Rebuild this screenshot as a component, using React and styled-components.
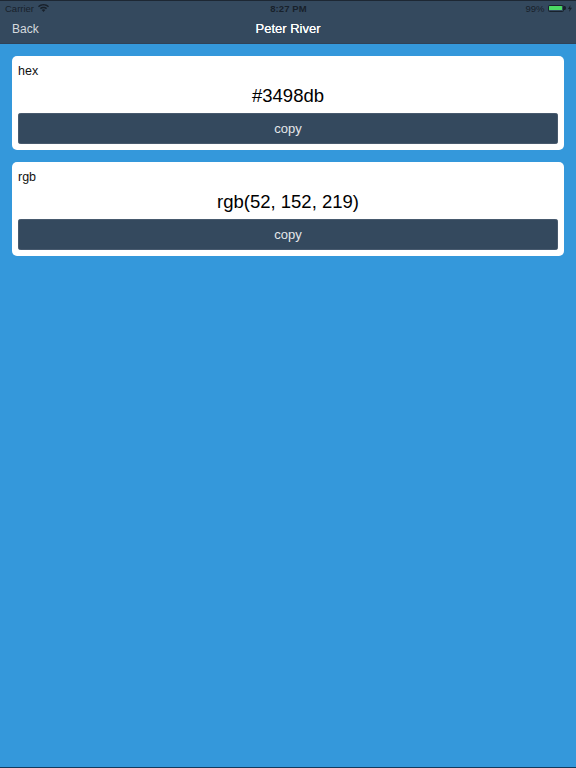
import styled, { createGlobalStyle } from "styled-components"

const GlobalStyle = createGlobalStyle`
  html, body {
    margin: 0;
    padding: 0;
    background: #3498db;
    font-family: "Liberation Sans", Arial, sans-serif;
  }
`

const Screen = styled.div`
  width: 576px;
  height: 768px;
  background: #3498db;
  border-bottom: 1px solid #123a5c;
  box-sizing: border-box;
  overflow: hidden;
`
const Header = styled.header`
  height: 44px;
  background: #34495e;
  box-shadow: inset 0 1px 0 #1d2733, inset 0 -1px 0 #2f4257;
`
const StatusBar = styled.div`
  height: 16px;
  padding: 0 4px 0 5px;
  display: grid;
  grid-template-columns: 1fr auto 1fr;
  align-items: center;
  font-size: 9.5px;
  color: #18212b;
`
const StatusLeft = styled.div`
  display: flex;
  align-items: center;
  gap: 4px;
`
const StatusRight = styled.div`
  display: flex;
  align-items: center;
  justify-content: flex-end;
`
const Percent = styled.span`
  margin-right: 3px;
`
const Clock = styled.span`
  font-weight: 700;
  letter-spacing: 0.1px;
`
const Battery = styled.div`
  width: 16px;
  height: 7px;
  padding: 0.5px;
  box-sizing: border-box;
  border: 0.5px solid #18212b;
  border-radius: 1.5px;
  display: flex;
`
const BatteryFill = styled.div`
  flex: 1;
  background: #4cd964;
  border-radius: 0.5px;
`
const BatteryTip = styled.svg`
  margin: 0 2px 0 0.5px;
`
const NavBar = styled.nav`
  height: 25px;
  padding: 0 12px;
  display: grid;
  grid-template-columns: 1fr auto 1fr;
  align-items: center;
  color: #fff;
`
const BackLink = styled.span`
  font-size: 12px;
  color: #d5dade;
`
const Title = styled.h1`
  margin: 0;
  font-size: 13px;
  font-weight: 400;
  text-shadow: 0 0 0.3px #fff;
`
const List = styled.main`
  padding: 12px 12px 0;
  display: flex;
  flex-direction: column;
  gap: 12px;
`
const Card = styled.section`
  height: 94px;
  padding: 7px 6px 6px;
  box-sizing: border-box;
  background: #fff;
  border-radius: 5px;
  display: flex;
  flex-direction: column;
`
const Label = styled.div`
  font-size: 12.5px;
  line-height: 16px;
  color: #111;
`
const Value = styled.div`
  height: 34px;
  font-size: 18.5px;
  line-height: 34px;
  text-align: center;
  color: #000;
`
const CopyButton = styled.button`
  height: 31px;
  padding: 0;
  border: none;
  border-radius: 3px;
  background: #34495e;
  box-shadow: inset 0 0 0 0.5px #5d6d7e;
  color: #e4e7ea;
  font-family: inherit;
  font-size: 13px;
  cursor: pointer;
`

const WifiIcon = () => (
  <svg width="11" height="8" viewBox="0 0 11 8" fill="#18212b">
    <path d="M5.5 0C3.4 0 1.5.8 0 2.2l1 1.1C2.2 2.1 3.8 1.5 5.5 1.5s3.3.6 4.5 1.8l1-1.1C9.5.8 7.6 0 5.5 0z" />
    <path d="M5.5 2.7c-1.4 0-2.6.5-3.6 1.4l1 1.1c.7-.7 1.6-1 2.6-1s1.9.3 2.6 1l1-1.1c-1-.9-2.2-1.4-3.6-1.4z" />
    <path d="M5.5 5.3c-.7 0-1.3.3-1.8.7L5.5 8l1.8-2c-.5-.4-1.1-.7-1.8-.7z" />
  </svg>
)

const BoltIcon = () => (
  <svg width="4" height="7" viewBox="0 0 4 7" fill="#18212b">
    <path d="M2.4 0 0 4h1.6L1.2 7 4 2.8H2.2z" />
  </svg>
)

const colors = [
  { label: "hex", value: "#3498db" },
  { label: "rgb", value: "rgb(52, 152, 219)" },
]

const App = () => {
  return (
    <>
      <GlobalStyle />
      <Screen>
        <Header>
          <StatusBar>
            <StatusLeft>
              <span>Carrier</span>
              <WifiIcon />
            </StatusLeft>
            <Clock>8:27 PM</Clock>
            <StatusRight>
              <Percent>99%</Percent>
              <Battery><BatteryFill /></Battery>
              <BatteryTip width="2" height="4" viewBox="0 0 2 4" fill="#18212b">
                <path d="M0 0h.6C1.4 0 2 .9 2 2s-.6 2-1.4 2H0z" />
              </BatteryTip>
              <BoltIcon />
            </StatusRight>
          </StatusBar>
          <NavBar>
            <BackLink>Back</BackLink>
            <Title>Peter River</Title>
          </NavBar>
        </Header>
        <List>
          {colors.map((c) => (
            <Card key={c.label}>
              <Label>{c.label}</Label>
              <Value>{c.value}</Value>
              <CopyButton>copy</CopyButton>
            </Card>
          ))}
        </List>
      </Screen>
    </>
  )
}

export default App
